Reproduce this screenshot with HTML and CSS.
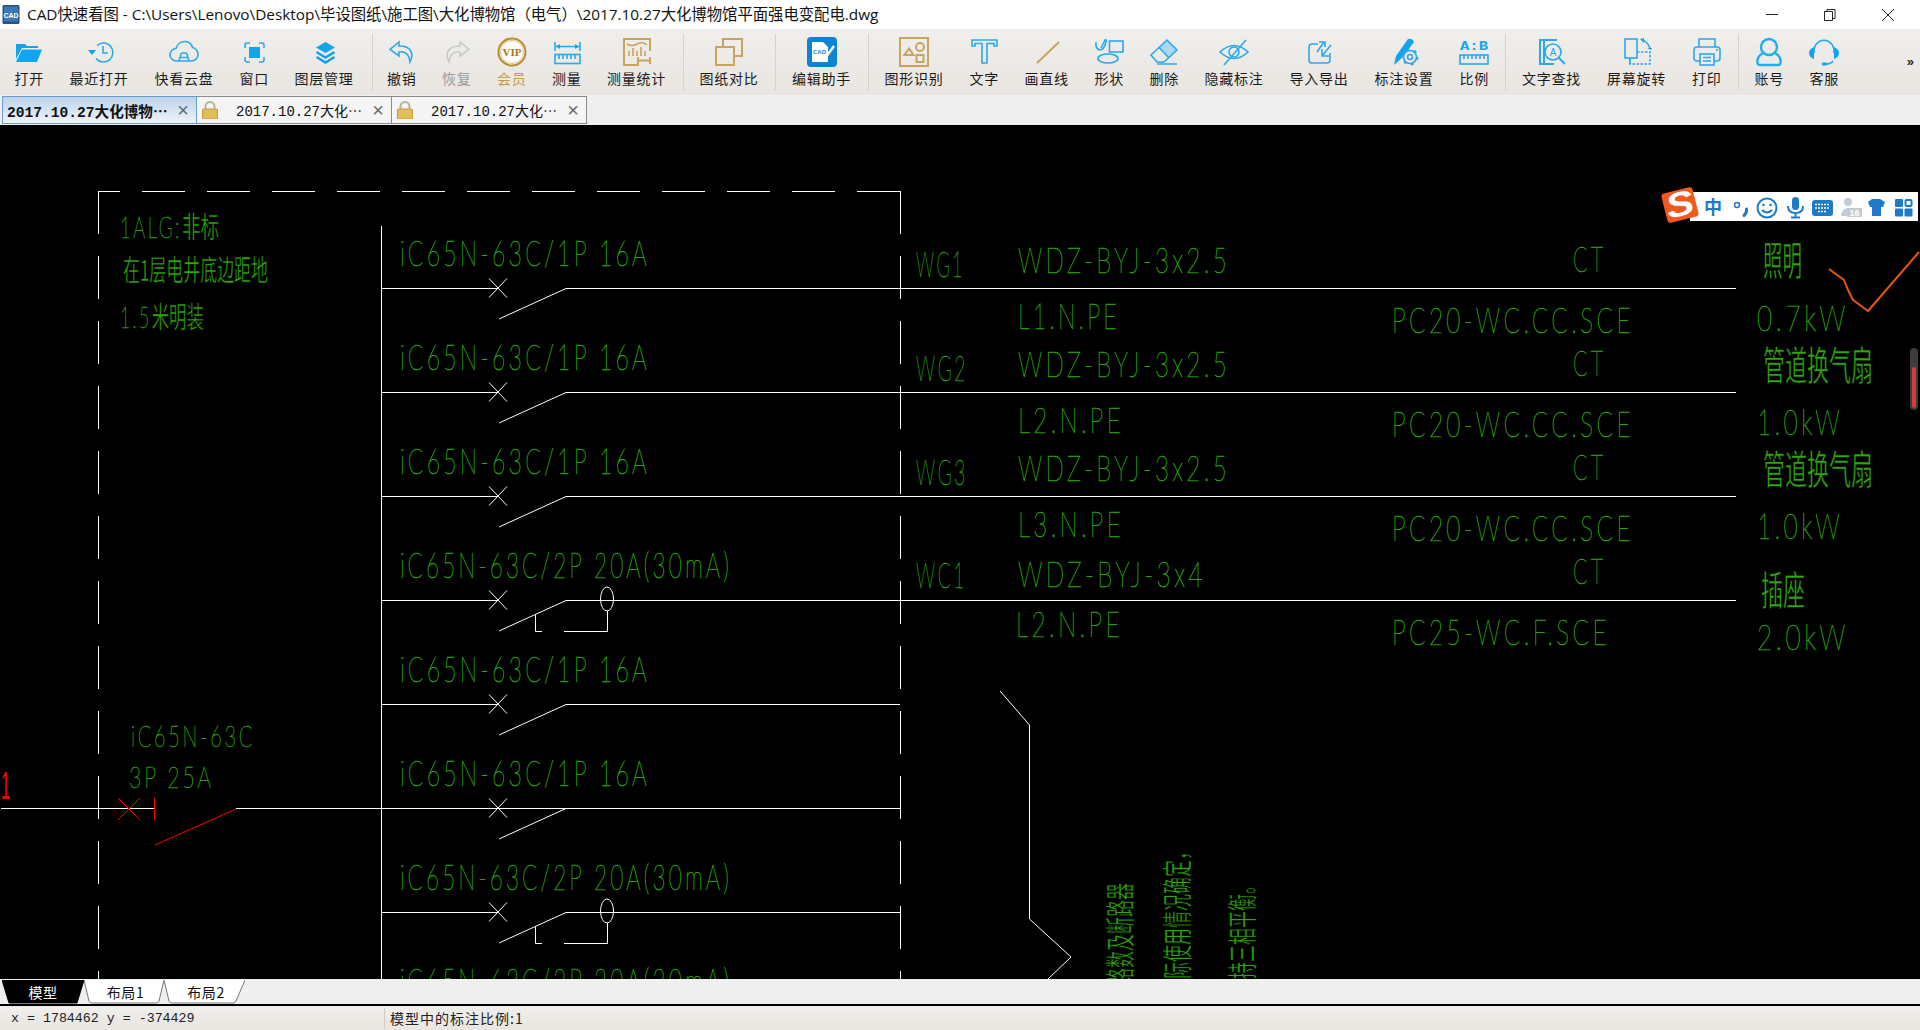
FILE: index.html
```html
<!DOCTYPE html>
<html lang="zh">
<head>
<meta charset="utf-8">
<title>CAD快速看图</title>
<link rel="stylesheet" href="styles.css">
</head>
<body>
<div class="app">
  <header class="titlebar">
    <svg class="appicon" viewBox="0 0 18 22"><rect x="0.5" y="1" width="17" height="19" rx="1.5" class="appicon-bg"/><rect x="2" y="2.5" width="14" height="15" class="appicon-in"/><text x="9" y="14" text-anchor="middle" class="appicon-t">CAD</text></svg>
    <div class="title">CAD快速看图 - C:\Users\Lenovo\Desktop\毕设图纸\施工图\大化博物馆（电气）\2017.10.27大化博物馆平面强电变配电.dwg</div>
    <div class="winbtns">
      <svg class="winbtn" viewBox="0 0 58 28"><path d="M23 13.5H35"/></svg>
      <svg class="winbtn" viewBox="0 0 58 28"><path d="M23.5 10.5h8v9h-8zM26 10.5V8.500h8v9h-2.500"/></svg>
      <svg class="winbtn" viewBox="0 0 58 28"><path d="M23 8L35 20M35 8L23 20"/></svg>
    </div>
  </header>

  <nav class="toolbar">
    <div class="tool first"><svg class="ic" viewBox="0 0 30 30"><path class="f" d="M2 7h9l2 2h11v2H8L2 22z"/><path class="f" d="M8 12.500H28L23 25H2z"/></svg><span class="w2">打开</span></div>
    <div class="tool"><svg class="ic" viewBox="0 0 30 30"><path d="M13 8.500A9.500 9.500 0 1 1 12 21.500M19 9v7h5"/><path class="f" d="M4 13h8l-4 5z"/></svg><span class="w4">最近打开</span></div>
    <div class="tool"><svg class="ic" viewBox="0 0 30 30"><path d="M8 24C3 24 1 20.500 1 18C1 14 4 11.500 7 11.500C8 7 12 4.500 16 4.500C20 4.500 23 7.500 23.500 10.500C27 11 29 14.500 29 17.500C29 21 26 24 22 24zM10 24l2-7q.5-1 2-1h2q1.500 0 2 1l2 7M11 20.500h8"/></svg><span class="w4">快看云盘</span></div>
    <div class="tool"><svg class="ic" viewBox="0 0 30 30"><path d="M6 11V8q0-2 2-2h3M20 6h3q2 0 2 2v3M25 20v3q0 2-2 2h-3M11 25H8q-2 0-2-2v-3"/><rect class="f" x="10" y="10" width="11" height="11"/></svg><span class="w2">窗口</span></div>
    <div class="tool"><svg class="ic" viewBox="0 0 30 30"><path class="f" d="M16.500 5L26 10.500L16.500 16L7 10.500z"/><path class="thick" d="M7.500 15l9 5.500l9-5.500M7.500 20l9 5.500l9-5.500"/></svg><span class="w4">图层管理</span></div>
    <i class="sep sep-a"></i>
    <div class="tool"><svg class="ic" viewBox="0 0 30 30"><path d="M12 5L3 12.500L12 19V15C18 14 22 17 23 25C27 17 25 9 12 9z"/></svg><span class="w2">撤销</span></div>
    <div class="tool mute"><svg class="ic grey" viewBox="0 0 30 30"><path d="M18 5L27 12.500L18 19V15C12 14 8 17 7 25C3 17 5 9 18 9z"/></svg><span class="w2">恢复</span></div>
    <div class="tool vip"><svg class="ic" viewBox="0 0 30 30"><circle class="ring" cx="15" cy="15" r="13.500"/><circle class="ring2" cx="15" cy="15" r="11.500"/><text x="15" y="19" text-anchor="middle" class="viptext">VIP</text></svg><span class="w2">会员</span></div>
    <div class="tool"><svg class="ic" viewBox="0 0 30 30"><path d="M3 5v9M28 5v9M4 9.500H27"/><path class="f" d="M4 9.500l4-2.500v5zM27 9.500l-4-2.500v5z"/><rect x="3" y="17.500" width="25" height="9"/><path d="M7 18v4M11 18v4M15 18v4M19 18v4M23 18v4"/></svg><span class="w2">测量</span></div>
    <div class="tool"><svg class="ic gold" viewBox="0 0 30 30"><path class="g2" d="M17 28H2V2H28V14"/><path d="M7 19v-5M11 19v-8M15 19v-5M19 19v-9M23 19v-5M5 7q5 3 10 0t10 1"/><path class="g2" d="M16 20v7M28 20v7M17 23.500H27"/></svg><span class="w4">测量统计</span></div>
    <i class="sep"></i>
    <div class="tool"><svg class="ic gold" viewBox="0 0 30 30"><path class="g2" d="M9 10V2H28V19H20"/><rect class="g2" x="2" y="10" width="18" height="18"/></svg><span class="w4">图纸对比</span></div>
    <i class="sep"></i>
    <div class="tool"><svg class="ic" viewBox="0 0 30 30"><rect class="edit" width="30" height="30" rx="4"/><path class="wf" d="M5 5H16L21 10V25H5z"/><text x="12.500" y="17" text-anchor="middle" class="cadmini">CAD</text><path class="wp" d="M27 9L16 24"/></svg><span class="w4">编辑助手</span></div>
    <i class="sep"></i>
    <div class="tool"><svg class="ic gold" viewBox="0 0 30 30"><rect class="g2" x="1" y="1" width="28" height="28"/><path class="g2" d="M10 11.500l4.500 6.500h-9z"/><circle class="g2" cx="21" cy="10" r="4"/><rect class="g2" x="17.500" y="18" width="7" height="7"/></svg><span class="w4">图形识别</span></div>
    <div class="tool"><svg class="ic" viewBox="0 0 30 30"><path d="M3 3H28V9H25V6.500H18V26H13V6.500H6V9H3z"/></svg><span class="w2">文字</span></div>
    <div class="tool"><svg class="ic gold" viewBox="0 0 30 30"><path class="g2" d="M5 26L27 5"/></svg><span class="w3">画直线</span></div>
    <div class="tool"><svg class="ic" viewBox="0 0 30 30"><rect x="15.500" y="4" width="13.500" height="11"/><ellipse cx="14" cy="21.500" rx="10" ry="4.500"/><path d="M2 5q-1 7 4 8q4 0 6-8q1-3-1-2l-4 8"/></svg><span class="w2">形状</span></div>
    <div class="tool"><svg class="ic" viewBox="0 0 30 30"><path class="hatch" d="M10 11L18 3L28 13L20 21z"/><path d="M2 18L18 3L28 13L15 25H8zM10 10.500L20 21M8 27H28"/></svg><span class="w2">删除</span></div>
    <div class="tool"><svg class="ic" viewBox="0 0 30 30"><path d="M1 15Q15 2 29 15Q15 28 1 15z"/><circle cx="15" cy="15" r="5"/><path d="M27 3L5 28"/></svg><span class="w4">隐藏标注</span></div>
    <div class="tool"><svg class="ic" viewBox="0 0 30 30"><path d="M14 7H8q-3 0-3 3V23q0 3 3 3H23q3 0 3-3V16M13 15L20 5M15 5h6v5M27 8L18 19M18 12v7h7"/></svg><span class="w4">导入导出</span></div>
    <div class="tool"><svg class="ic" viewBox="0 0 30 30"><path class="f" d="M5 28L7 19L19 2Q23 1 25 5L13 21z"/><circle class="gear" cx="21" cy="20" r="6.500"/><circle class="gearline" cx="21" cy="20" r="6.500"/><circle cx="21" cy="20" r="2.500"/><circle class="gearteeth" cx="21" cy="20" r="7.500"/></svg><span class="w4">标注设置</span></div>
    <div class="tool"><svg class="ic" viewBox="0 0 30 30"><text x="15" y="13" text-anchor="middle" textLength="28" lengthAdjust="spacingAndGlyphs" class="abtext">A:B</text><rect x="1" y="18" width="28" height="9"/><path d="M5 18v4M9 18v4M13 18v4M17 18v4M21 18v4M25 18v4"/></svg><span class="w2">比例</span></div>
    <i class="sep"></i>
    <div class="tool"><svg class="ic" viewBox="0 0 30 30"><path class="w2s" d="M20 3H3V27H17M7 3V27"/><circle cx="16" cy="15" r="8"/><text x="16" y="19" text-anchor="middle" class="atext">A</text><path class="w2s" d="M21.500 20.500L28 27"/></svg><span class="w4">文字查找</span></div>
    <div class="tool"><svg class="ic" viewBox="0 0 30 30"><rect x="3" y="2" width="12" height="19"/><path class="dash" d="M15 15H28V27H8V21"/><path d="M20 3q5 1 8 8M8 21v6"/><path class="f" d="M18 2l4-1v5zM29 13l-4-2h5z"/></svg><span class="w4">屏幕旋转</span></div>
    <div class="tool"><svg class="ic" viewBox="0 0 30 30"><rect x="2" y="10" width="26" height="14" rx="3"/><path d="M7 10V2H23V10"/><rect class="paper" x="8" y="17" width="14" height="11"/><path d="M11 20.500h8M11 24h8"/><circle class="f" cx="25" cy="13" r="1"/></svg><span class="w2">打印</span></div>
    <i class="sep"></i>
    <div class="tool"><svg class="ic" viewBox="0 0 30 30"><g class="fat"><circle cx="15" cy="10" r="8"/><path d="M9 16C4 19 3 23 3.500 26Q4 28 6 28H24Q26 28 26.500 26C27 23 26 19 21 16"/></g></svg><span class="w2">账号</span></div>
    <div class="tool"><svg class="ic" viewBox="0 0 30 30"><path d="M5 16C4-1 26-1 25 16M24 24q-2 3-7 3"/><path class="f" d="M5 10V22Q0 20 0 16T5 10zM25 10V22Q30 20 30 16T25 10z"/><rect class="f" x="13" y="25.500" width="5" height="3" rx="1"/></svg><span class="w2">客服</span></div>
    <div class="more">»</div>
  </nav>

  <div class="tabbar">
    <div class="tab active"><span class="tabtext">2017.10.27大化博物⋯</span><span class="tabx">×</span></div>
    <div class="tab"><svg class="lock" viewBox="0 0 16 18"><path class="shackle" d="M3.500 9V5.500a4.500 4.500 0 0 1 9 0V9"/><rect class="lockbody" x="0.500" y="8" width="15" height="10" rx="1"/></svg><span class="tabtext plain">2017.10.27大化⋯</span><span class="tabx">×</span></div>
    <div class="tab"><svg class="lock" viewBox="0 0 16 18"><path class="shackle" d="M3.500 9V5.500a4.500 4.500 0 0 1 9 0V9"/><rect class="lockbody" x="0.500" y="8" width="15" height="10" rx="1"/></svg><span class="tabtext plain">2017.10.27大化⋯</span><span class="tabx">×</span></div>
  </div>

  <main class="canvas">
    <svg class="drawing" viewBox="0 125 1920 854" width="1920" height="854">
      <defs>
        <g id="cross" class="ln"><path d="M489 -9.500L507 9.500M489 9.500L507 -9.500M381 .5H498M499 31L566 .5"/></g>
        <g id="rcd" class="ln"><ellipse cx="607" cy="-1" rx="6.500" ry="12"/><path d="M607.500 11V31.500H564M535.500 15V31.500H542"/></g>
      </defs>
      <path class="dashv" d="M98.500 191V979M900.500 191V979"/>
      <path class="dashh" d="M98 191.500H900"/>
      <path class="ln" d="M381.500 226V979"/>
      <use href="#cross" y="288"/><path class="ln" d="M566 288.500H1736"/>
      <use href="#cross" y="392"/><path class="ln" d="M566 392.500H1736"/>
      <use href="#cross" y="496"/><path class="ln" d="M566 496.500H1736"/>
      <use href="#cross" y="600"/><use href="#rcd" y="600"/><path class="ln" d="M566 600.500H1736"/>
      <use href="#cross" y="704"/><path class="ln" d="M566 704.500H900"/>
      <use href="#cross" y="808"/><path class="ln" d="M566 808.500H900"/>
      <use href="#cross" y="912"/><use href="#rcd" y="912"/><path class="ln" d="M566 912.500H900"/>
      <path class="ln" d="M1 808.500H154M236 808.500H566"/>
      <path class="rd" d="M118 798L140 820M118 820L140 798M154.500 798V820M155 845L236 809"/>
      <path class="ln" d="M1000 691L1029.500 725V919L1071 957L1048 979"/>
      <path class="ink" d="M1829 269L1844 280L1848 290L1853 300L1868 311L1919 252"/>

      <text class="t" font-size="29" x="120" y="238" textLength="99" lengthAdjust="spacingAndGlyphs">1ALG:<tspan class="c">非标</tspan></text>
      <text class="t c" font-size="29" x="123" y="281" textLength="145" lengthAdjust="spacingAndGlyphs">在1层电井底边距地</text>
      <text class="t" font-size="29" x="120" y="328" textLength="84" lengthAdjust="spacingAndGlyphs">1.5<tspan class="c">米明装</tspan></text>

      <text class="t" font-size="36" x="400" y="266" textLength="250" lengthAdjust="spacingAndGlyphs">iC65N-63C/1P 16A</text>
      <text class="t" font-size="36" x="400" y="370" textLength="250" lengthAdjust="spacingAndGlyphs">iC65N-63C/1P 16A</text>
      <text class="t" font-size="36" x="400" y="474" textLength="250" lengthAdjust="spacingAndGlyphs">iC65N-63C/1P 16A</text>
      <text class="t" font-size="36" x="400" y="578" textLength="332" lengthAdjust="spacingAndGlyphs">iC65N-63C/2P 20A(30mA)</text>
      <text class="t" font-size="36" x="400" y="682" textLength="250" lengthAdjust="spacingAndGlyphs">iC65N-63C/1P 16A</text>
      <text class="t" font-size="36" x="400" y="786" textLength="250" lengthAdjust="spacingAndGlyphs">iC65N-63C/1P 16A</text>
      <text class="t" font-size="36" x="400" y="890" textLength="332" lengthAdjust="spacingAndGlyphs">iC65N-63C/2P 20A(30mA)</text>
      <text class="t" font-size="36" x="400" y="994" textLength="332" lengthAdjust="spacingAndGlyphs">iC65N-63C/2P 20A(30mA)</text>

      <text class="t" font-size="36" x="916" y="277" textLength="49" lengthAdjust="spacingAndGlyphs">WG1</text>
      <text class="t" font-size="36" x="916" y="381" textLength="52" lengthAdjust="spacingAndGlyphs">WG2</text>
      <text class="t" font-size="36" x="916" y="485" textLength="52" lengthAdjust="spacingAndGlyphs">WG3</text>
      <text class="t" font-size="36" x="916" y="588" textLength="51" lengthAdjust="spacingAndGlyphs">WC1</text>

      <text class="t" font-size="36" x="1018" y="273" textLength="212" lengthAdjust="spacingAndGlyphs">WDZ-BYJ-3x2.5</text>
      <text class="t" font-size="36" x="1018" y="377" textLength="212" lengthAdjust="spacingAndGlyphs">WDZ-BYJ-3x2.5</text>
      <text class="t" font-size="36" x="1018" y="481" textLength="212" lengthAdjust="spacingAndGlyphs">WDZ-BYJ-3x2.5</text>
      <text class="t" font-size="36" x="1018" y="587" textLength="188" lengthAdjust="spacingAndGlyphs">WDZ-BYJ-3x4</text>

      <text class="t" font-size="36" x="1018" y="329" textLength="102" lengthAdjust="spacingAndGlyphs">L1.N.PE</text>
      <text class="t" font-size="36" x="1018" y="433" textLength="106" lengthAdjust="spacingAndGlyphs">L2.N.PE</text>
      <text class="t" font-size="36" x="1018" y="537" textLength="106" lengthAdjust="spacingAndGlyphs">L3.N.PE</text>
      <text class="t" font-size="36" x="1016" y="637" textLength="107" lengthAdjust="spacingAndGlyphs">L2.N.PE</text>

      <text class="t" font-size="36" x="1573" y="272" textLength="33" lengthAdjust="spacingAndGlyphs">CT</text>
      <text class="t" font-size="36" x="1573" y="376" textLength="33" lengthAdjust="spacingAndGlyphs">CT</text>
      <text class="t" font-size="36" x="1573" y="480" textLength="33" lengthAdjust="spacingAndGlyphs">CT</text>
      <text class="t" font-size="36" x="1573" y="584" textLength="33" lengthAdjust="spacingAndGlyphs">CT</text>

      <text class="t" font-size="36" x="1392" y="333" textLength="242" lengthAdjust="spacingAndGlyphs">PC20-WC.CC.SCE</text>
      <text class="t" font-size="36" x="1392" y="437" textLength="242" lengthAdjust="spacingAndGlyphs">PC20-WC.CC.SCE</text>
      <text class="t" font-size="36" x="1392" y="541" textLength="242" lengthAdjust="spacingAndGlyphs">PC20-WC.CC.SCE</text>
      <text class="t" font-size="36" x="1392" y="645" textLength="218" lengthAdjust="spacingAndGlyphs">PC25-WC.F.SCE</text>

      <text class="t c" font-size="40" x="1763" y="275" textLength="39" lengthAdjust="spacingAndGlyphs">照明</text>
      <text class="t" font-size="36" x="1757" y="331" textLength="92" lengthAdjust="spacingAndGlyphs">0.7kW</text>
      <text class="t c" font-size="40" x="1763" y="380" textLength="110" lengthAdjust="spacingAndGlyphs">管道换气扇</text>
      <text class="t" font-size="36" x="1757" y="435" textLength="86" lengthAdjust="spacingAndGlyphs">1.0kW</text>
      <text class="t c" font-size="40" x="1763" y="484" textLength="110" lengthAdjust="spacingAndGlyphs">管道换气扇</text>
      <text class="t" font-size="36" x="1757" y="539" textLength="86" lengthAdjust="spacingAndGlyphs">1.0kW</text>
      <text class="t c" font-size="40" x="1761" y="605" textLength="44" lengthAdjust="spacingAndGlyphs">插座</text>
      <text class="t" font-size="36" x="1757" y="650" textLength="92" lengthAdjust="spacingAndGlyphs">2.0kW</text>

      <text class="t" font-size="30" x="131" y="747" textLength="124" lengthAdjust="spacingAndGlyphs">iC65N-63C</text>
      <text class="t" font-size="30" x="129" y="788" textLength="85" lengthAdjust="spacingAndGlyphs">3P 25A</text>
      <text class="t red" font-size="38" x="1" y="799" textLength="9" lengthAdjust="spacingAndGlyphs">1</text>

      <text class="t c" font-size="30" transform="translate(1131 1002) rotate(-90)" textLength="119" lengthAdjust="spacingAndGlyphs">回路数及断路器</text>
      <text class="t c" font-size="30" transform="translate(1188 996) rotate(-90)" textLength="153" lengthAdjust="spacingAndGlyphs">实际使用情况确定，</text>
      <text class="t c" font-size="30" transform="translate(1253 996) rotate(-90)" textLength="119" lengthAdjust="spacingAndGlyphs">保持三相平衡。</text>
    </svg>

    <svg class="ime" viewBox="1655 185 265 40" width="265" height="40">
      <rect class="ime-bar" x="1690" y="192" width="228" height="29"/>
      <g transform="rotate(-14 1680 205)"><rect class="ime-s" x="1664" y="190" width="32" height="30" rx="3"/><text class="ime-st" x="1680" y="216" text-anchor="middle" textLength="28" lengthAdjust="spacingAndGlyphs">S</text></g>
      <text class="ime-t" x="1713" y="214" text-anchor="middle">中</text>
      <circle class="ime-thin" cx="1737" cy="205" r="2.500"/><path class="ime-comma" d="M1746.500 209q.5 4-2.500 6.500"/>
      <circle class="ime-o" cx="1767" cy="208" r="9.500"/>
      <path class="ime-o" d="M1762 210q5 5 10 0"/><circle class="ime-f" cx="1763.500" cy="205" r="1.300"/><circle class="ime-f" cx="1770.500" cy="205" r="1.300"/>
      <rect class="ime-f" x="1792" y="197" width="7" height="13" rx="3.500"/><path class="ime-o" d="M1788 206q0 7 7.500 7t7.500-7M1795.500 213v4M1791 217.500h9"/>
      <rect class="ime-f" x="1812" y="200" width="21" height="16" rx="3"/><path class="ime-w" d="M1815 204.500h15M1815 208h15M1818 211.500h9"/>
      <circle class="ime-g" cx="1848" cy="202" r="4"/><path class="ime-g" d="M1841 216q1-8 7-8t5 3h-2v5z"/><rect class="ime-g" x="1847" y="208" width="15" height="9"/><text class="ime-n" x="1854.500" y="216" text-anchor="middle">16</text>
      <path class="ime-f" d="M1872 199h8l5 3l-2 5h-2v9h-9v-9h-2l-2-5z"/>
      <rect class="ime-f" x="1895" y="199" width="8" height="8" rx="1"/><rect class="ime-f" x="1895" y="208.500" width="8" height="8" rx="1"/><rect class="ime-f" x="1904.500" y="208.500" width="8" height="8" rx="1"/><rect class="ime-ring" x="1905.500" y="200" width="6" height="6" rx="1"/>
    </svg>
    <div class="scrollmark"><i></i></div>
  </main>

  <div class="sheets">
    <div class="sheet sheet-on"><svg viewBox="0 0 82 24" preserveAspectRatio="none"><path d="M0 0H82L75 23H7z"/></svg><span>模型</span></div>
    <div class="sheet"><svg viewBox="0 0 80 24" preserveAspectRatio="none"><path d="M0 0L5 21Q6 23 8 23H72Q74 23 75 21L80 0"/></svg><span>布局1</span></div>
    <div class="sheet"><svg viewBox="0 0 81 24" preserveAspectRatio="none"><path d="M0 0L5 21Q6 23 8 23H69Q71 23 72 21L81 0"/></svg><span>布局2</span></div>
  </div>
  <footer class="status">
    <div class="coords">x = 1784462 y = -374429</div>
    <div class="scale">模型中的标注比例:1</div>
  </footer>
</div>
</body>
</html>
```

FILE: styles.css
```css
* { box-sizing: border-box; }
html, body { margin: 0; padding: 0; }
body { font-family: "Noto Sans CJK SC", "Liberation Sans", sans-serif; color: #111; background: #000; }
.app { width: 1920px; height: 1030px; display: flex; flex-direction: column; overflow: hidden; }

/* title bar */
.titlebar { height: 29px; background: #fff; display: flex; align-items: center; flex: none; }
.appicon { width: 18px; height: 22px; margin-left: 2px; flex: none; }
.appicon-bg { fill: #27517f; }
.appicon-in { fill: #3a78b5; }
.appicon-t { font: bold 7px "Liberation Sans", sans-serif; fill: #fff; }
.title { margin-left: 7px; font-size: 15.350px; line-height: 29px; color: #111; white-space: nowrap; flex: 1; font-family: "Open Sans", "Noto Sans CJK SC", sans-serif; }
.winbtns { display: flex; margin-right: 3px; }
.winbtn { width: 58px; height: 28px; fill: none; stroke: #222; stroke-width: 1; }

/* toolbar */
.toolbar { height: 66px; flex: none; display: flex; padding-left: 1.500px; background: linear-gradient(#f0efec, #e9e5e0); position: relative; }
.tool { padding: 8px 13px 0; display: flex; flex-direction: column; align-items: center; flex: none; }
.tool span { display: block; font-size: 14px; line-height: 16px; margin-top: 2.500px; text-align: center; white-space: nowrap; letter-spacing: .7px; color: #1a1a1a; }
.w2 { width: 29px; } .w3 { width: 44px; } .w4 { width: 59px; }
.tool.mute span { color: #9a9a9a; }
.tool.vip span { color: #c39a4e; }
.sep { width: 1px; height: 56px; margin: 5px 3px 0 3.500px; background: #d6d3cf; flex: none; }
.sep-a { margin: 5px 1.500px 0 5px; }
.more { position: absolute; right: 6px; top: 25px; font: bold 13px "Liberation Sans", sans-serif; color: #222; }

/* icons */
.ic { width: 30px; height: 30px; margin: 0 -1px; flex: none; display: block; fill: none; stroke: #2aa9ec; stroke-width: 1.600; }
.ic .f { fill: #12a5ef; stroke: none; }
.ic .thick { stroke: #12a0e8; stroke-width: 2.400; }
.ic.grey { stroke: #c9c9c9; }
.ic.gold { stroke: #c8a45e; }
.ic .g2 { stroke: #c8a45e; stroke-width: 2; fill: none; }
.ic .ring { stroke: #b58a2e; stroke-width: 2; fill: #fff; }
.ic .ring2 { stroke: #d9bd7c; stroke-width: 1; fill: #fff; }
.viptext { font: bold 11px "Liberation Serif", serif; fill: #a8741a; stroke: none; }
.ic .edit { fill: #0c84d6; stroke: none; }
.ic .wf { fill: #fff; stroke: none; }
.ic .wp { stroke: #fff; stroke-width: 2.500; }
.cadmini { font: bold 6px "Liberation Sans", sans-serif; fill: #0c84d6; stroke: none; }
.ic .hatch { fill: #a9d8f3; stroke: none; }
.ic .gear { fill: #ece9e5; stroke: none; }
.ic .gearline { fill: none; stroke: #2aa9ec; }
.ic .gearteeth { fill: none; stroke: #2aa9ec; stroke-width: 2; stroke-dasharray: 3 4.850; }
.abtext { font: bold 13px "Liberation Mono", monospace; fill: #12a5ef; stroke: none; }
.atext { font: 10px "Liberation Sans", sans-serif; fill: #2aa9ec; stroke: none; }
.ic .w2s { stroke-width: 2; }
.ic .dash { stroke-dasharray: 2.500 1.500; }
.ic .paper { fill: #f0efec; }
.ic .fat { stroke: #1eaef5; stroke-width: 2.400; }

/* document tabs */
.tabbar { height: 30px; flex: none; display: flex; align-items: flex-start; padding: 1px 0 0 2px; background: #efefef; }
.tab { width: 195px; height: 28px; display: flex; align-items: center; padding-left: 5px; border: 1px solid #8b8b8b; border-left-width: 0; background: #f5f5f5; position: relative; }
.tab.active { border: 1px solid #6a9bd1; background: linear-gradient(#bcd3ea, #eef4fa); padding-left: 4px; }
.tabtext { font: bold 14.600px "Liberation Mono", "Noto Sans CJK SC", monospace; white-space: nowrap; color: #111; }
.tabtext.plain { font: 14px "Liberation Mono", "Noto Sans CJK SC", monospace; margin-left: 18px; }
.tabx { position: absolute; right: 7px; top: 1px; font: 20px/24px "Liberation Sans", sans-serif; color: #6a6a6a; }
.lock { width: 16px; height: 18px; flex: none; }
.shackle { fill: none; stroke: #b7b39f; stroke-width: 2; }
.lockbody { fill: #e2bd5a; stroke: #c79c35; }

/* drawing */
.canvas { height: 854px; flex: none; background: #000; position: relative; overflow: hidden; }
.drawing { display: block; }
.ln { stroke: #fff; stroke-width: 1; fill: none; }
.dashv { stroke: #fff; stroke-width: 1; fill: none; stroke-dasharray: 43 22; }
.dashh { stroke: #fff; stroke-width: 1; fill: none; stroke-dasharray: 43 22; stroke-dashoffset: 21; }
.rd { stroke: #ff0000; stroke-width: 1; fill: none; }
.ink { stroke: #e8570c; stroke-width: 2; fill: none; stroke-linejoin: round; }
.t { font-family: "Lato", "Liberation Sans", sans-serif; font-weight: 100; letter-spacing: .14em; fill: #2ba00b; stroke: #2ba00b; stroke-width: .6; }
.c { font-family: "Noto Sans CJK SC", sans-serif; font-weight: 400; letter-spacing: 0; stroke: #000; stroke-width: .55; fill: #2fa80c; }
.red { font-family: "Liberation Sans", sans-serif; font-weight: 400; letter-spacing: 0; fill: #ff0000; stroke: none; }

/* input method bar */
.ime { position: absolute; left: 1655px; top: 60px; }
.ime-bar { fill: #fff; }
.ime-s { fill: #f05a1e; }
.ime-st { font: italic bold 34px "Liberation Sans", sans-serif; fill: #fff; }
.ime-t { font: bold 18px "Noto Sans CJK SC", sans-serif; fill: #1e7ac8; }
.ime-o { fill: none; stroke: #1e7ac8; stroke-width: 2; }
.ime-thin { fill: none; stroke: #1e7ac8; stroke-width: 1.500; }
.ime-comma { fill: none; stroke: #1e7ac8; stroke-width: 3; stroke-linecap: round; }
.ime-f { fill: #1e7ac8; }
.ime-w { fill: none; stroke: #fff; stroke-width: 1.500; stroke-dasharray: 2 1; }
.ime-g { fill: #c3ccd6; }
.ime-n { font: bold 9px "Liberation Sans", sans-serif; fill: #fff; }
.ime-ring { fill: #fff; stroke: #1e7ac8; stroke-width: 2; }

.scrollmark { position: absolute; right: 2px; top: 223px; width: 8px; height: 62px; border-radius: 4px; background: #3c3c3c; padding: 19px 2px 2px; }
.scrollmark i { display: block; height: 41px; border-radius: 2px; background: #d93a3a; }

/* sheet tabs */
.sheets { height: 27px; flex: none; display: flex; padding: 1px 0 0 2px; background: #efefef; border-bottom: 2px solid #000; }
.sheet { position: relative; height: 24px; width: 80px; display: flex; align-items: center; justify-content: center; font-size: 14px; letter-spacing: .6px; color: #111; }
.sheet:first-child { width: 82px; color: #fff; }
.sheet:last-child { width: 81px; }
.sheet svg { position: absolute; inset: 0; width: 100%; height: 100%; fill: #fff; stroke: #777; stroke-width: 1; }
.sheet-on svg { fill: #000; stroke: #000; }
.sheet span { position: relative; margin-left: 3px; }
.sheet-on span { margin-left: 0; }

/* status bar */
.status { flex: 1; display: flex; align-items: center; background: linear-gradient(#f0efec, #e9e5e0); }
.coords { width: 385px; padding: 1px 0 0 11px; font: 13.300px "Liberation Mono", monospace; border-right: 1px solid #cfccc8; line-height: 20px; color: #222; }
.scale { padding-left: 5px; font-size: 14px; letter-spacing: 1px; color: #222; }
```
